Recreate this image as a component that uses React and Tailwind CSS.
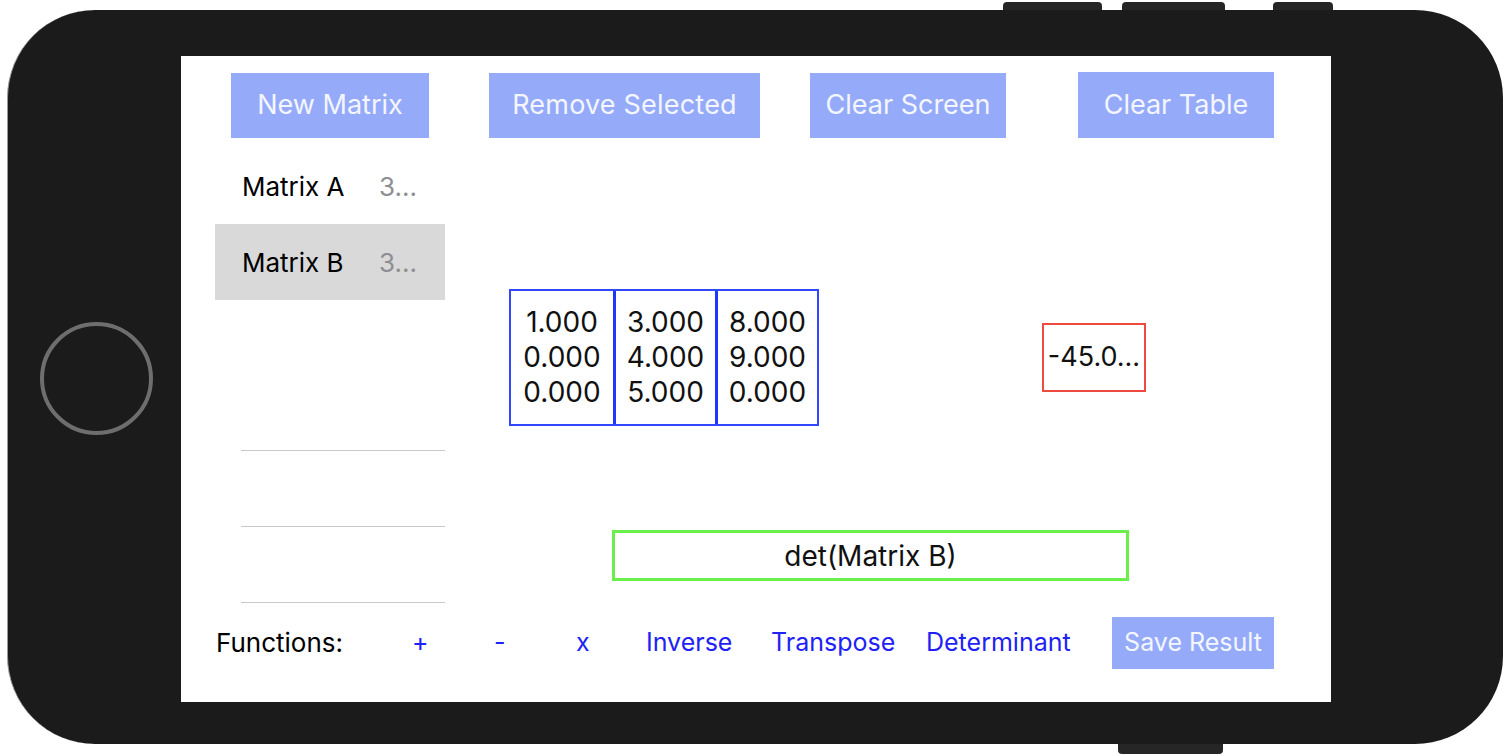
import React from 'react';

const columns = [
    ['1.000', '0.000', '0.000'],
    ['3.000', '4.000', '5.000'],
    ['8.000', '9.000', '0.000'],
];

const functionItems = [
    { label: '+', width: 'w-[82px]' },
    { label: '-', width: 'w-[82px]' },
    { label: 'x', width: 'w-[70px]' },
    { label: 'Inverse', width: 'w-[125px]' },
    { label: 'Transpose', width: 'w-[155px]' },
    { label: 'Determinant', width: 'w-[186px]' },
];

const TopButton = ({ label, className }) => (
    <button className={`bg-[#95abf9] text-[#f4f6ff] flex items-center justify-center ${className}`}>
        {label}
    </button>
);

const App = () => {
    return (
        <div className="w-[1510px] h-[756px] bg-white overflow-hidden" style={{ fontFamily: 'Inter, "Noto Sans", sans-serif' }}>
            <div className="relative ml-[7px] mt-[10px] w-[1496px] h-[734px]">
                {/* side buttons */}
                <div className="absolute left-[996px] -top-[8px] w-[99px] h-[14px] rounded-t-[4px] bg-[#262626]"></div>
                <div className="absolute left-[1115px] -top-[8px] w-[103px] h-[14px] rounded-t-[4px] bg-[#262626]"></div>
                <div className="absolute left-[1266px] -top-[8px] w-[60px] h-[14px] rounded-t-[4px] bg-[#262626]"></div>
                <div className="absolute left-[1111px] top-[728px] w-[105px] h-[16px] rounded-b-[4px] bg-[#262626]"></div>

                <div className="relative w-full h-full rounded-[88px] bg-[#1b1b1b] flex items-start border-l border-[#9a9a9a]">
                    {/* home button */}
                    <div className="w-[173px] h-full flex items-center justify-center">
                        <div className="w-[113px] h-[113px] rounded-full border-[4px] border-[#6e6e6e] ml-[4px] mt-[2px]"></div>
                    </div>

                    {/* screen */}
                    <div className="mt-[46px] w-[1150px] h-[646px] bg-white flex flex-col">
                        <div className="flex items-end h-[82px] text-[27px]">
                            <TopButton label="New Matrix" className="ml-[50px] w-[198px] h-[65px]" />
                            <TopButton label="Remove Selected" className="ml-[60px] w-[271px] h-[65px] tracking-[0.2px]" />
                            <TopButton label="Clear Screen" className="ml-[50px] w-[196px] h-[65px]" />
                            <TopButton label="Clear Table" className="ml-[72px] w-[196px] h-[66px]" />
                        </div>

                        <div className="flex mt-[11px] h-[456px]">
                            {/* table */}
                            <div className="ml-[34px] w-[230px] flex flex-col">
                                <div className="h-[75px] flex items-center pl-[27px] text-[26px]">
                                    <span className="w-[137px] text-black">Matrix A</span>
                                    <span className="text-[#8e8e93]">3...</span>
                                </div>
                                <div className="h-[76px] flex items-center pl-[27px] text-[26px] bg-[#d9d9d9]">
                                    <span className="w-[137px] text-black">Matrix B</span>
                                    <span className="text-[#8e8e93]">3...</span>
                                </div>
                                <div className="h-[76px]"></div>
                                <div className="h-[75px] border-b border-[#c8c8cc] ml-[26px]"></div>
                                <div className="h-[76px] border-b border-[#c8c8cc] ml-[26px]"></div>
                                <div className="h-[76px] border-b border-[#c8c8cc] ml-[26px]"></div>
                            </div>

                            {/* work area */}
                            <div className="flex-1 flex flex-col">
                                <div className="flex items-center mt-[140px] h-[137px]">
                                    <div className="ml-[64px] flex h-[137px] border-2 border-solid border-[#3048ff]">
                                        {columns.map((col, i) => (
                                            <div
                                                key={i}
                                                className={`w-[102px] flex flex-col items-center justify-center text-[28px] leading-[35px] text-[#111] ${i > 0 ? 'border-l-[3px] border-[#1f36ff]' : ''}`}
                                            >
                                                {col.map((v, j) => (
                                                    <span key={j}>{v}</span>
                                                ))}
                                            </div>
                                        ))}
                                    </div>
                                    <div className="ml-[223px] w-[104px] h-[69px] border-2 border-solid border-[#ee4a40] flex items-center justify-center text-[27px] text-[#111]">
                                        -45.0...
                                    </div>
                                </div>
                                <div className="ml-[167px] mt-[104px] w-[517px] h-[51px] border-[3px] border-[#6bf04b] flex items-center justify-center text-[28px] text-[#111]">
                                    det(Matrix B)
                                </div>
                            </div>
                        </div>

                        {/* functions row */}
                        <div className="flex items-center h-[53px] mt-[11px]">
                            <span className="ml-[35px] w-[196px] text-[26px] text-black">Functions:</span>
                            {functionItems.map((f) => (
                                <button key={f.label} className={`${f.width} text-left text-[25px] text-[#1e22f4]`}>
                                    {f.label}
                                </button>
                            ))}
                            <TopButton label="Save Result" className="w-[162px] h-[52px] text-[25px]" />
                        </div>
                    </div>
                </div>
            </div>
        </div>
    );
};

export default App;
